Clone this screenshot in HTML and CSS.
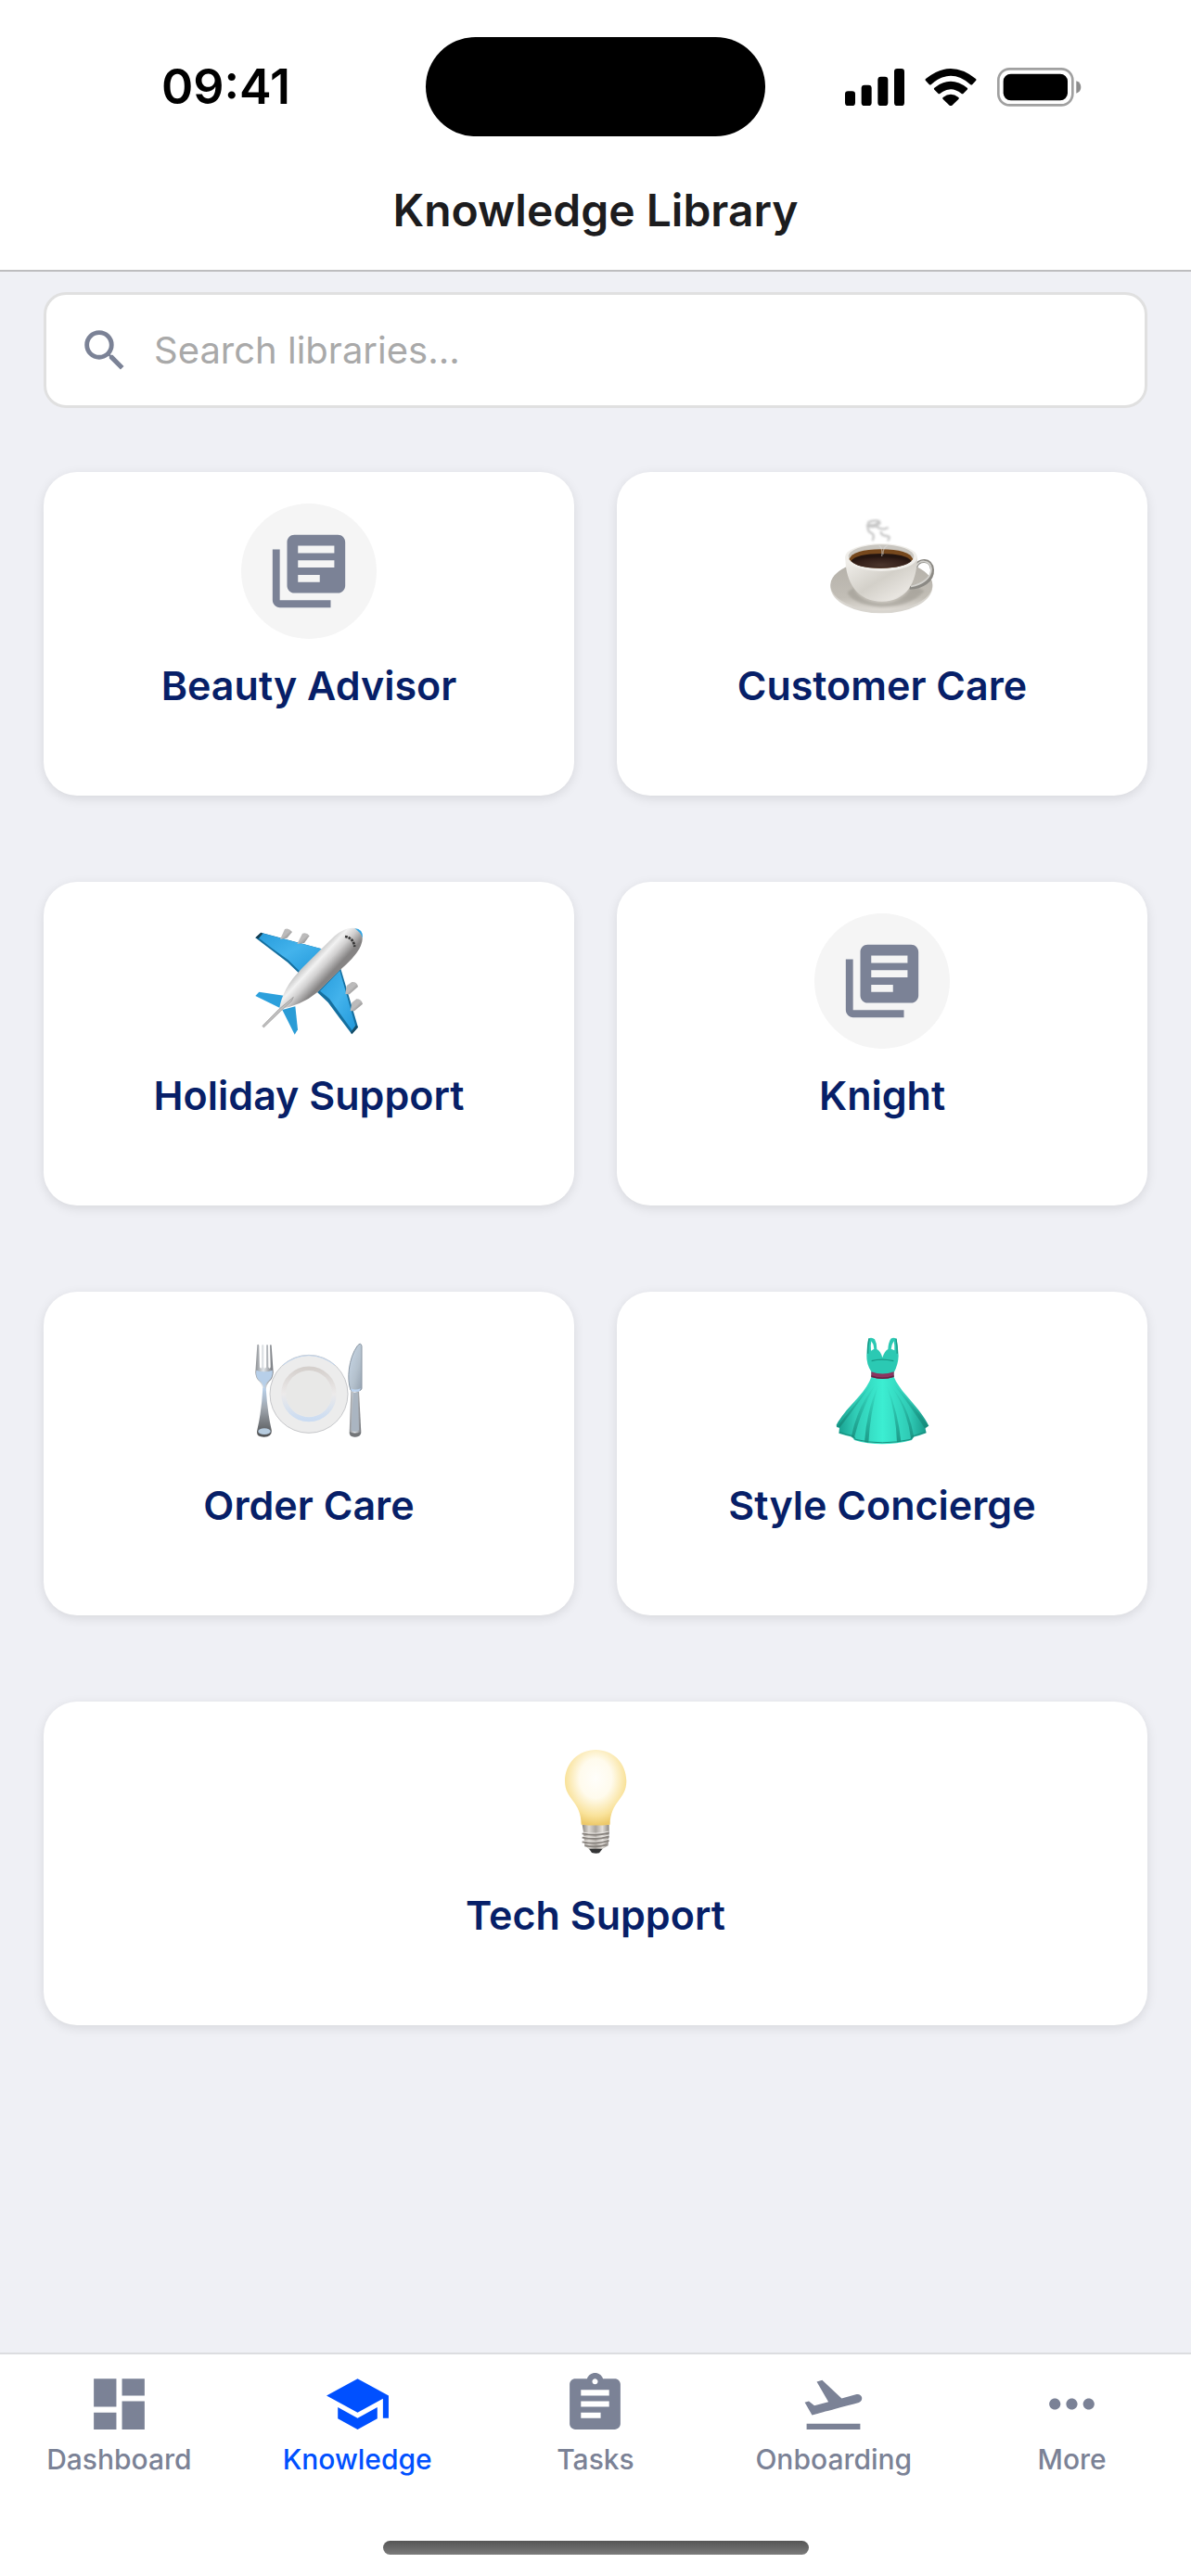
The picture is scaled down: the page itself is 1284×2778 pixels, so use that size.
FILE: index.html
```html
<!DOCTYPE html>
<html lang="en">
<head>
    <meta charset="UTF-8">
    <meta name="viewport" content="width=device-width, initial-scale=1.0">
    <title>Knowledge Library</title>
    <link rel="stylesheet" href="styles.css">
</head>
<body>

<!-- Header -->
<header class="header">
    <div class="status-bar">
        <span class="time">09:41</span>
        <div class="island"></div>
        <div class="status-icons">
            <svg width="64" height="40" viewBox="0 0 192 120">
                <rect x="0" y="73" width="33" height="47" rx="10"/>
                <rect x="53" y="53" width="33" height="67" rx="10"/>
                <rect x="106" y="26" width="33" height="94" rx="10"/>
                <rect x="159" y="0" width="33" height="120" rx="10"/>
            </svg>
            <svg width="56" height="40" viewBox="0 0 168 120">
                <path d="M3 33Q0 36 3 39L14 51Q17 54 21 51Q84 -4 147 51Q151 54 154 51L165 39Q168 36 165 33Q84 -33 3 33Z"/>
                <path d="M31 62Q28 65 31 68L43 80Q46 83 50 80Q84 53 118 80Q122 83 125 80L137 68Q140 65 137 62Q84 20 31 62Z"/>
                <path d="M59 93Q56 96 59 99L80 119Q84 122 88 119L109 99Q112 96 109 93Q84 73 59 93Z"/>
            </svg>
            <svg width="91" height="42" viewBox="0 0 273 126">
                <rect x="4" y="4" width="240" height="117" rx="36" fill="none" stroke="#a0a0a0" stroke-width="8"/>
                <rect x="20" y="20" width="208" height="86" rx="24"/>
                <path d="M256 43Q271 48 271 63T256 83Z" fill="#8c8c8c"/>
            </svg>
        </div>
    </div>
    <h1>Knowledge Library</h1>
</header>

<!-- Library list -->
<main class="content">
    <label class="search-box">
        <svg class="search-icon" viewBox="0 0 24 24"><path d="M15.5 14h-.79l-.28-.27A6.471 6.471 0 0 0 16 9.5 6.5 6.5 0 1 0 9.5 16c1.61 0 3.09-.59 4.23-1.57l.27.28v.79l5 4.99L20.49 19l-4.99-5zm-6 0C7.01 14 5 11.99 5 9.5S7.01 5 9.5 5 14 7.01 14 9.5 11.99 14 9.5 14z"/></svg>
        <input type="text" class="search-input" placeholder="Search libraries..." aria-label="Search libraries">
    </label>

    <div class="cards">
        <button class="card">
            <span class="card-icon default-icon">
                <svg viewBox="0 0 24 24"><path d="M4 6H2v14c0 1.100.9 2 2 2h14v-2H4V6zm16-4H8c-1.100 0-2 .9-2 2v12c0 1.100.9 2 2 2h12c1.100 0 2-.9 2-2V4c0-1.100-.9-2-2-2zm-1 9H9V9h10v2zm-4 4H9v-2h6v2zm4-8H9V5h10v2z"/></svg>
            </span>
            <span class="card-title">Beauty Advisor</span>
        </button>

        <button class="card">
            <svg class="card-icon" viewBox="54 42 438 438">
                <defs>
                    <linearGradient id="saucer" x1="0" y1="0" x2="0" y2="1"><stop offset="0" stop-color="#b3afa8"/><stop offset=".75" stop-color="#c2beb6"/><stop offset="1" stop-color="#dedad4"/></linearGradient>
                    <linearGradient id="cup" x1="0" y1="0" x2="1" y2="1"><stop offset="0" stop-color="#f4f2ee"/><stop offset=".5" stop-color="#d3d0c9"/><stop offset=".8" stop-color="#e8e5e0"/><stop offset="1" stop-color="#a9a59d"/></linearGradient>
                    <radialGradient id="coffee" cx=".5" cy=".8" r=".6"><stop offset="0" stop-color="#4b352c"/><stop offset=".7" stop-color="#35201a"/><stop offset="1" stop-color="#241510"/></radialGradient>
                    <filter id="soft"><feGaussianBlur stdDeviation="3"/></filter>
                </defs>
                <ellipse cx="271" cy="311" rx="165" ry="86" fill="#d8d5cf"/>
                <ellipse cx="271" cy="306" rx="165" ry="82" fill="url(#saucer)"/>
                <path d="M180 315Q200 362 275 364Q345 362 372 305L410 325Q360 380 260 376Q180 368 160 330Z" fill="#98948c" opacity=".5" filter="url(#soft)"/>
                <path d="M382 247C390 222 432 218 435 256C437 292 400 314 362 314" fill="none" stroke="#8b8984" stroke-width="12"/>
                <path d="M384 244C392 224 429 222 432 254C432 282 403 304 366 310" fill="none" stroke="#d4d3cf" stroke-width="5"/>
                <path d="M154 215C154 300 195 359 272 359C350 359 385 300 387 215Z" fill="url(#cup)"/>
                <ellipse cx="270" cy="216" rx="117" ry="45" fill="#f0eeea"/>
                <ellipse cx="270" cy="213" rx="106" ry="38" fill="#c9c6c0"/>
                <path d="M166 222Q180 190 270 190T373 222Q350 250 270 251T166 222Z" fill="#76481d"/>
                <path d="M172 228Q190 204 270 204T368 228Q345 250 270 251T172 228Z" fill="url(#coffee)"/>
                <g fill="none" stroke="#aaa" stroke-width="7" opacity=".65" filter="url(#soft)">
                    <path d="M226 104Q250 92 266 101M228 111Q223 132 237 137T242 162M253 116Q265 125 279 125L293 120M269 132Q268 145 286 147T291 163"/>
                    <path d="M223 111Q250 121 266 101" stroke-width="12"/>
                </g>
                <path d="M263 178Q275 184 272 213M290 178Q275 184 276 207" fill="none" stroke="#ddd" stroke-width="4" opacity=".5"/>
            </svg>
            <span class="card-title">Customer Care</span>
        </button>

        <button class="card">
            <svg class="card-icon" viewBox="60 15 438 438">
                <defs>
                    <linearGradient id="body" gradientUnits="userSpaceOnUse" x1="270" y1="155" x2="340" y2="220"><stop offset="0" stop-color="#aaa"/><stop offset=".4" stop-color="#f2f2f2"/><stop offset=".65" stop-color="#d1d0d0"/><stop offset="1" stop-color="#858383"/></linearGradient>
                    <linearGradient id="wing" x1="0" y1="0" x2="1" y2="1"><stop offset="0" stop-color="#269bdb"/><stop offset=".5" stop-color="#43b3ec"/><stop offset="1" stop-color="#2298da"/></linearGradient>
                    <linearGradient id="engine" x1="0" y1="0" x2="1" y2="1"><stop offset="0" stop-color="#b9b8b8"/><stop offset=".5" stop-color="#bcbbbb"/><stop offset="1" stop-color="#706f6f"/></linearGradient>
                </defs>
                <path d="M106 94L124 77L320 130L246 208L210 173L157 133Z" fill="#156f9f"/>
                <path d="M112 91L127 79L320 130L251 204L212 166L160 128Z" fill="url(#wing)"/>
                <path d="M106 94L124 77L130 80L116 97Z" fill="#153d50"/>
                <path d="M382 194L438 383L418 406L377 352L341 303L306 270Z" fill="#156f9f"/>
                <path d="M379 200L430 380L420 395L380 340L345 291L315 266Z" fill="url(#wing)"/>
                <path d="M418 406L438 383L432 376L414 400Z" fill="#174c66"/>
                <path d="M106 282L118 269L198 281L190 323Z" fill="#2ca0dc"/>
                <path d="M193 327L235 316L243 391L233 407Z" fill="#2a9cd6"/>
                <g fill="url(#engine)">
                    <path d="M186 99L201 66Q214 60 225 75L208 95Z"/>
                    <path d="M241 114L258 80Q272 75 281 88L264 111Z"/>
                    <path d="M397 276L401 249L418 237Q434 235 438 252L410 277Z"/>
                    <path d="M413 331L418 304L433 292Q449 292 453 308L426 331Z"/>
                </g>
                <path d="M183 325C191 280 210 240 257 192L361 89Q405 53 438 66Q464 88 442 130Q425 160 380 198L307 270Q255 313 183 325Z" fill="url(#body)"/>
                <path d="M427 64Q455 65 453 95Q446 75 427 64Z" fill="#2ba6e8"/>
                <path d="M396 90Q423 94 427 123" fill="none" stroke="#363636" stroke-width="8" stroke-dasharray="8 3"/>
                <path d="M129 379L181 326L229 286L223 299L188 331L133 384Z" fill="#c0bfbf" stroke="#929191" stroke-width="2"/>
            </svg>
            <span class="card-title">Holiday Support</span>
        </button>

        <button class="card">
            <span class="card-icon default-icon">
                <svg viewBox="0 0 24 24"><path d="M4 6H2v14c0 1.100.9 2 2 2h14v-2H4V6zm16-4H8c-1.100 0-2 .9-2 2v12c0 1.100.9 2 2 2h12c1.100 0 2-.9 2-2V4c0-1.100-.9-2-2-2zm-1 9H9V9h10v2zm-4 4H9v-2h6v2zm4-8H9V5h10v2z"/></svg>
            </span>
            <span class="card-title">Knight</span>
        </button>

        <button class="card">
            <svg class="card-icon" viewBox="60 21 438 438">
                <defs>
                    <linearGradient id="steel"><stop offset="0" stop-color="#8a8d91"/><stop offset=".45" stop-color="#e1e5e9"/><stop offset="1" stop-color="#707378"/></linearGradient>
                    <linearGradient id="handle" x1="0" y1="0" x2="0" y2="1"><stop offset="0" stop-color="#bad2ec"/><stop offset=".4" stop-color="#a1a8b0"/><stop offset="1" stop-color="#4f5052"/></linearGradient>
                    <linearGradient id="ring" x1="0" y1="0" x2="0" y2="1"><stop offset="0" stop-color="#d5d0cd"/><stop offset=".5" stop-color="#eceaea"/><stop offset="1" stop-color="#cbdcf2"/></linearGradient>
                    <linearGradient id="blade" x1="0" y1="0" x2="1" y2="1"><stop offset="0" stop-color="#c9d9e9"/><stop offset=".6" stop-color="#b4c1cd"/><stop offset="1" stop-color="#95a2b0"/></linearGradient>
                </defs>
                <circle cx="279" cy="250" r="126" fill="#ececec" stroke="#c6c7ca" stroke-width="3"/>
                <path d="M195 156Q279 94 363 156" fill="none" stroke="#c1d5ed" stroke-width="3"/>
                <circle cx="279" cy="250" r="82" fill="#e9e9e9" stroke="url(#ring)" stroke-width="15"/>
                <circle cx="279" cy="248" r="74" fill="#e8e8e7"/>
                <path d="M112 91Q115 87 118 93L120 163Q124 171 127 163V93Q130 87 133 93V163Q137 171 141 163V93Q144 87 147 93L148 163Q152 171 155 163L153 93Q156 87 158 93L164 180Q163 200 150 211Q141 221 140 235H130Q129 219 119 209Q107 200 106 180Z" fill="url(#steel)"/>
                <path d="M109 173Q135 182 161 173Q164 196 149 207Q136 216 135 240Q132 215 120 207Q105 196 109 173Z" fill="#b7cfe9"/>
                <path d="M130 230H140Q145 310 158 365Q162 389 134 389T112 366Q126 306 130 230Z" fill="url(#handle)"/>
                <ellipse cx="135" cy="371" rx="20" ry="10" fill="#b7ccdf"/>
                <path d="M414 237C401 204 407 134 436 94Q447 81 450 95V232Q449 238 440 240H420Z" fill="url(#blade)" stroke="#8c98a5" stroke-width="3"/>
                <path d="M415 239H441L448 375Q446 389 428 389T410 376Z" fill="url(#steel)"/>
                <path d="M422 246H437L441 367Q428 377 416 367Z" fill="#aab5c1"/>
                <path d="M414 232Q428 239 447 232L441 242H418Z" fill="#bcd4f1"/>
                <path d="M411 372Q429 381 447 372Q447 389 428 389T411 372Z" fill="#737578"/>
            </svg>
            <span class="card-title">Order Care</span>
        </button>

        <button class="card">
            <svg class="card-icon" viewBox="54 21 438 438">
                <defs>
                    <linearGradient id="skirt"><stop offset="0" stop-color="#169c8c"/><stop offset=".2" stop-color="#30cbb5"/><stop offset=".5" stop-color="#3ceed2"/><stop offset=".8" stop-color="#2fc9b4"/><stop offset="1" stop-color="#169484"/></linearGradient>
                    <linearGradient id="fold" x1="0" y1="0" x2="0" y2="1"><stop offset="0" stop-color="#16907f" stop-opacity="0"/><stop offset="1" stop-color="#158676" stop-opacity=".75"/></linearGradient>
                </defs>
                <path d="M239 193C220 250 157 291 125 350L126 357L135 359L133 377Q155 384 177 389L183 399Q270 425 369 399L374 389Q397 384 416 376L412 359L424 353C391 287 333 248 310 193Z" fill="url(#skirt)"/>
                <g fill="url(#fold)">
                    <path d="M243 210Q190 290 135 359L128 355Q180 290 243 210Z"/>
                    <path d="M251 220Q205 300 182 394L173 389Q192 292 251 220Z"/>
                    <path d="M261 220Q234 310 229 407L216 405Q223 302 261 220Z"/>
                    <path d="M287 220Q318 312 321 406L334 404Q324 303 287 220Z"/>
                    <path d="M298 220Q353 292 367 398L376 389Q360 291 298 220Z"/>
                    <path d="M306 212Q360 282 412 362L422 353Q370 279 306 212Z"/>
                </g>
                <path d="M135 373Q155 382 181 386L187 397Q271 418 365 397L370 387L414 373" fill="none" stroke="#178c7c" stroke-width="3"/>
                <path d="M229 70Q240 65 249 73Q257 88 256 105Q268 111 274 132Q281 111 292 105Q293 84 301 71Q310 66 319 71Q324 94 326 127Q325 155 311 181V193H238V178Q222 153 223 126Q224 91 229 70ZM238 79Q235 94 237 110L247 104Q246 88 238 79ZM311 79Q303 91 302 104L313 109Q314 94 311 79Z" fill="#2bc9b3" fill-rule="evenodd"/>
                <path d="M231 71Q226 95 227 119M318 71Q322 95 322 119M239 143Q270 134 310 143" fill="none" stroke="#179785" stroke-width="4"/>
                <path d="M238 178Q274 191 311 178V195Q274 207 238 195Z" fill="#8c3560"/>
                <path d="M238 190Q274 203 311 190V195Q274 207 238 195Z" fill="#652343"/>
            </svg>
            <span class="card-title">Style Concierge</span>
        </button>

        <button class="card card-wide">
            <svg class="card-icon" viewBox="27 24 438 438">
                <defs>
                    <radialGradient id="glow" cx=".5" cy=".38" r=".62"><stop offset="0" stop-color="#fffefb"/><stop offset=".42" stop-color="#fffbed"/><stop offset=".8" stop-color="#f9e29a"/><stop offset="1" stop-color="#edc969"/></radialGradient>
                    <linearGradient id="screw"><stop offset="0" stop-color="#8c8781"/><stop offset=".25" stop-color="#ddd9d4"/><stop offset=".5" stop-color="#aaa59f"/><stop offset=".75" stop-color="#e3dfda"/><stop offset="1" stop-color="#8b8781"/></linearGradient>
                </defs>
                <path d="M223 395H271L258 412Q247 415 234 411Z" fill="#343536"/>
                <path d="M203 320H290V344L287 388L269 398H224L211 388L207 344Z" fill="url(#screw)"/>
                <path d="M203 349Q247 358 290 347M203 362Q247 371 290 359M203 376Q247 385 290 372M211 388Q247 396 283 385" fill="none" stroke="#87827d" stroke-width="5"/>
                <path d="M205 345Q247 353 289 342M205 358Q247 366 289 354M205 372Q247 380 289 367" fill="none" stroke="#e7e4e0" stroke-width="3"/>
                <path d="M200 320C200 243 147 240 147 179C148 119 192 78 247 78S345 119 346 179C346 240 294 243 293 320Q246 325 200 320Z" fill="url(#glow)"/>
            </svg>
            <span class="card-title">Tech Support</span>
        </button>
    </div>
</main>

<!-- Bottom navigation -->
<footer class="tab-bar">
    <nav class="tabs">
        <a href="#" class="tab">
            <svg viewBox="0 0 24 24"><path d="M3 13h8V3H3v10zm0 8h8v-6H3v6zm10 0h8V11h-8v10zm0-18v6h8V3h-8z"/></svg>
            Dashboard
        </a>
        <a href="#" class="tab active">
            <svg viewBox="0 0 24 24"><path d="M5 13.180v4L12 21l7-3.820v-4L12 17l-7-3.820zM12 3L1 9l11 6 9-4.910V17h2V9L12 3z"/></svg>
            Knowledge
        </a>
        <a href="#" class="tab">
            <svg viewBox="0 0 24 24"><path d="M19 3h-4.180C14.400 1.840 13.300 1 12 1s-2.400.84-2.820 2H5c-1.100 0-2 .9-2 2v14c0 1.100.9 2 2 2h14c1.100 0 2-.9 2-2V5c0-1.100-.9-2-2-2zm-7 0c.55 0 1 .45 1 1s-.45 1-1 1-1-.45-1-1 .45-1 1-1zm2 14H7v-2h7v2zm3-4H7v-2h10v2zm0-4H7V7h10v2z"/></svg>
            Tasks
        </a>
        <a href="#" class="tab">
            <svg viewBox="0 0 24 24"><path d="M2.500 19h19v2h-19z"/><path transform="translate(24.200 0) scale(-1 1)" d="M0 0"/><path d="M22.070 9.640c-.21-.8-1.040-1.280-1.840-1.060L14.920 10l-6.900-6.430-1.930.51 4.140 7.170-4.970 1.330-1.970-1.540-1.450.39 2.590 4.490s7.120-1.900 16.570-4.430c.81-.23 1.280-1.050 1.070-1.850z"/></svg>
            Onboarding
        </a>
        <a href="#" class="tab">
            <svg viewBox="0 0 24 24"><path d="M6 10c-1.100 0-2 .9-2 2s.9 2 2 2 2-.9 2-2-.9-2-2-2zm12 0c-1.100 0-2 .9-2 2s.9 2 2 2 2-.9 2-2-.9-2-2-2zm-6 0c-1.100 0-2 .9-2 2s.9 2 2 2 2-.9 2-2-.9-2-2-2z"/></svg>
            More
        </a>
    </nav>
    <div class="home-indicator"></div>
</footer>

</body>
</html>
```
FILE: styles.css
```css
* {
    box-sizing: border-box;
}
body {
    margin: 0;
    min-height: 100vh;
    display: flex;
    flex-direction: column;
    font-family: Inter, "Liberation Sans", sans-serif;
    background-color: #eff0f5;
}
svg {
    display: block;
}

/* Header */
.header {
    background-color: #fff;
    border-bottom: 2px solid #bdbdbf;
    padding-top: 40px;
}
.status-bar {
    display: grid;
    grid-template-columns: 1fr 366px 1fr;
    align-items: center;
}
.time {
    padding-left: 28px;
    text-align: center;
    font-size: 52px;
    font-weight: 600;
    line-height: 60px;
}
.island {
    height: 107px;
    border-radius: 54px;
    background-color: #000;
}
.status-icons {
    display: flex;
    align-items: center;
    gap: 22px;
    padding-left: 86px;
}
h1 {
    margin: 50px 0 34px;
    text-align: center;
    font-size: 48px;
    font-weight: 600;
    line-height: 60px;
    color: #1c1c1e;
}

/* Search */
.content {
    flex: 1;
    padding: 22px 47px;
}
.search-box {
    display: flex;
    align-items: center;
    gap: 24px;
    height: 125px;
    padding: 0 34px;
    background-color: #fff;
    border: 3px solid #e0e0e0;
    border-radius: 24px;
}
.search-icon {
    width: 58px;
    height: 58px;
    fill: #7b8296;
}
.search-input {
    flex: 1;
    min-width: 0;
    padding: 0;
    border: none;
    outline: none;
    background: none;
    font-family: inherit;
    font-size: 40px;
    line-height: 50px;
    color: #1c1c1e;
}
.search-input::placeholder {
    color: #a9a9a9;
    opacity: 1;
}

/* Cards */
.cards {
    display: grid;
    grid-template-columns: 1fr 1fr;
    gap: 93px 46px;
    margin-top: 69px;
}
.card {
    display: flex;
    flex-direction: column;
    align-items: center;
    justify-content: flex-start;
    gap: 24px;
    min-height: 349px;
    padding: 34px;
    border: none;
    border-radius: 36px;
    background-color: #fff;
    box-shadow: 0 3px 12px rgba(0, 0, 0, 0.1);
    font-family: inherit;
    cursor: pointer;
}
.card-wide {
    grid-column: 1 / -1;
}
.card-icon {
    width: 146px;
    height: 146px;
}
.default-icon {
    display: flex;
    align-items: center;
    justify-content: center;
    border-radius: 50%;
    background-color: #f5f5f5;
}
.default-icon svg {
    width: 94px;
    height: 94px;
    fill: #7b8296;
}
.card-title {
    font-size: 43px;
    font-weight: 600;
    line-height: 52px;
    color: #071f68;
}

/* Bottom navigation */
.tab-bar {
    padding-bottom: 23px;
    background-color: #fff;
    border-top: 2px solid #dcdde0;
}
.tabs {
    display: grid;
    grid-template-columns: repeat(5, 1fr);
}
.tab {
    display: flex;
    flex-direction: column;
    align-items: center;
    gap: 5px;
    padding-top: 17px;
    font-size: 30px;
    font-weight: 500;
    line-height: 36px;
    text-decoration: none;
    color: #7b8296;
}
.tab svg {
    width: 73px;
    height: 73px;
    fill: currentColor;
}
.tab.active {
    color: #0050ff;
}
.home-indicator {
    width: 459px;
    height: 15px;
    margin: 70px auto 0;
    border-radius: 8px;
    background: linear-gradient(#555, #7b7b7b);
}
```
